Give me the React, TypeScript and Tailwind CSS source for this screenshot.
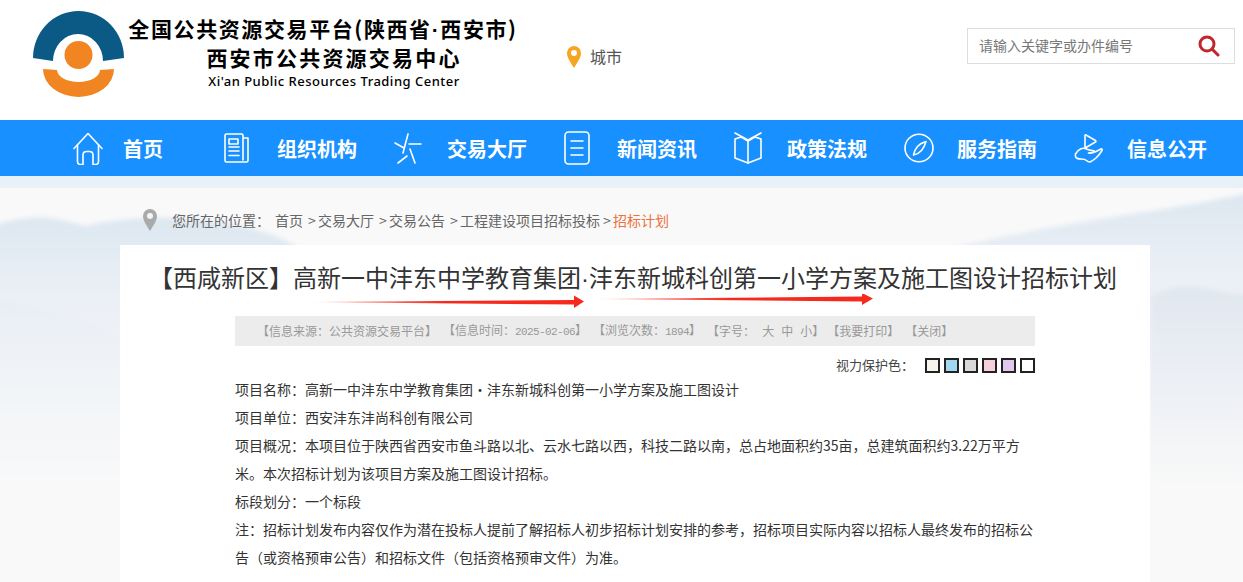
import React from "react";

const ic = { fill: "none", stroke: "#fff", strokeWidth: 1.6, strokeLinecap: "round" as const, strokeLinejoin: "round" as const };

const HomeIcon = () => (
  <svg width="30" height="33" viewBox="0 0 30 33" {...ic}>
    <path d="M1 16.5 15 1.5l14 15" />
    <path d="M4.500 13v16.500q0 3 3 3h2.500V23q0-3.500 3.500-3.500h3q3.500 0 3.500 3.500v9.500h2.500q3 0 3-3V13" />
  </svg>
);
const DocIcon = () => (
  <svg width="25" height="30" viewBox="0 0 25 30" {...ic}>
    <path d="M19 5V2.500Q19 1 17.500 1H2.500Q1 1 1 2.500v25Q1 29 2.500 29h20q1.500 0 1.500-1.500V5h-5v22" />
    <path d="M5 6h9v5H5zM5 14h10M5 18h10M5 22.500h10" />
  </svg>
);
const StarIcon = () => (
  <svg width="28" height="31" viewBox="0 0 28 31" {...ic}>
    <path d="M14 1 9 20M1 10l9 5M15 11h12M16 16l5 14M4 30l9-7" />
  </svg>
);
const ListIcon = () => (
  <svg width="26" height="34" viewBox="0 0 26 34" {...ic}>
    <rect x="1" y="1" width="24" height="32" rx="3.500" />
    <path d="M7 10h12M7 17h12M7 24h12" />
  </svg>
);
const BookIcon = () => (
  <svg width="28" height="32" viewBox="0 0 28 32" {...ic}>
    <path d="M1 1l13 7 13-7" />
    <path d="M1 7v19l13 5 13-5V7l-6-2-7 4-7-4z" />
    <path d="M14 9v22" />
  </svg>
);
const CompassIcon = () => (
  <svg width="30" height="30" viewBox="0 0 30 30" {...ic}>
    <ellipse cx="15" cy="15" rx="14" ry="13.800" />
    <path d="M22 8.500q-1.500 5.500-4.500 9t-8 4.500q1-5 4-8.500t8.500-5z" />
  </svg>
);
const HandIcon = () => (
  <svg width="30" height="29" viewBox="0 0 30 29" {...ic}>
    <path d="M11 1.500v11.500q0 1 1 .500l9.500-5.500q1-.700 0-1.500L12 1q-1-.500-1 .500z" />
    <path d="M1.500 20q2-3.500 5-5t6 0 6 1.500q2.500 0 1.500 1.500t-5.500 1l6.500-1 6-3q1.500-.500 1 1.500-3 5-6 7.500T16 28q-2 0-3.500-1.500T7 25t-5-1.500q-1-1.500-.500-3.500z" />
  </svg>
);

const navItems = [
  { label: "首页", Icon: HomeIcon, cls: "w-[151px]", box: "w-[50px]" },
  { label: "组织机构", Icon: DocIcon, cls: "w-[170px]", box: "w-[53px]" },
  { label: "交易大厅", Icon: StarIcon, cls: "w-[170px]", box: "w-[53px]" },
  { label: "新闻资讯", Icon: ListIcon, cls: "w-[170px]", box: "w-[53px]" },
  { label: "政策法规", Icon: BookIcon, cls: "w-[170px]", box: "w-[53px]" },
  { label: "服务指南", Icon: CompassIcon, cls: "w-[170px]", box: "w-[53px]" },
  { label: "信息公开", Icon: HandIcon, cls: "w-[116px]", box: "w-[53px]" },
];

const crumbs = ["交易大厅", "交易公告", "工程建设项目招标投标"];

const Pin = ({ color, w, h }: { color: string; w: number; h: number }) => (
  <svg width={w} height={h} viewBox="0 0 14 22">
    <path fillRule="evenodd" fill={color} d="M7 22C3 15.500 0 11.500 0 7a7 7 0 0 1 14 0c0 4.500-3 8.500-7 15zM7 4a3 3 0 1 0 0 6 3 3 0 0 0 0-6z" />
  </svg>
);

const Backdrop = () => (
  <svg className="absolute inset-0 w-full h-full" viewBox="0 0 1243 394" preserveAspectRatio="none">
    <defs>
      <linearGradient id="m1" x1="0" y1="0" x2="0" y2="1">
        <stop offset="0" stopColor="#dde7f0" />
        <stop offset="0.3" stopColor="#ebf0f6" />
        <stop offset="1" stopColor="#f9f9f9" />
      </linearGradient>
      <linearGradient id="m2" x1="0" y1="0" x2="0" y2="1">
        <stop offset="0" stopColor="#e0e7f0" />
        <stop offset="0.5" stopColor="#edf0f5" />
        <stop offset="1" stopColor="#f9f9f9" />
      </linearGradient>
      <linearGradient id="m3" x1="0" y1="0" x2="0" y2="1">
        <stop offset="0" stopColor="#e8eef5" />
        <stop offset="1" stopColor="#f9f9f9" stopOpacity="0" />
      </linearGradient>
      <filter id="soft"><feGaussianBlur stdDeviation="2.500" /></filter>
    </defs>
    <rect width="1243" height="394" fill="#f9f9fa" />
    <g filter="url(#soft)">
      <path d="M-10 38Q30 26 55 31T85 38Q110 32 150 30T240 38T310 70V300H-10z" fill="url(#m1)" />
      <path d="M-10 112Q60 118 120 150V270H-10z" fill="url(#m3)" />
      <path d="M950 60Q1040 40 1120 28T1255 4V290H950z" fill="url(#m1)" />
      <path d="M1150 108Q1175 94 1205 100T1255 108V300H1150z" fill="url(#m2)" />
    </g>
  </svg>
);

const Arrows = () => (
  <svg className="absolute left-[184px] top-[49px]" width="760" height="20" viewBox="0 0 760 20">
    <defs>
      <linearGradient id="a1" x1="0" y1="0" x2="1" y2="0">
        <stop offset="0" stopColor="#f62a1c" stopOpacity="0" />
        <stop offset="0.2" stopColor="#f62a1c" stopOpacity="0.55" />
        <stop offset="0.5" stopColor="#f62a1c" />
        <stop offset="1" stopColor="#f62a1c" />
      </linearGradient>
    </defs>
    <path d="M0 8 270 6V1.500l10 6-10 6.500V10.500Z" fill="url(#a1)" />
    <path d="M284 5 558 2.500V-1l11 5.500-11 6.500V7.500Z" fill="url(#a1)" />
  </svg>
);

const swatches = ["bg-[#f7f4ee]", "bg-[#a0d8ef]", "bg-[#d9d9d9]", "bg-[#f7d0da]", "bg-[#e0c8ef]", "bg-white"];

const Num12 = ({ children }: { children: React.ReactNode }) => (
  <span className="font-['Liberation_Mono'] text-[11px] tracking-[-.6px]">{children}</span>
);

export default function App() {
  return (
    <div className="h-screen overflow-hidden flex flex-col bg-white font-['Noto_Sans_CJK_SC',sans-serif] text-[#333]">
      <header className="h-[120px] shrink-0 flex items-start">
        <svg className="ml-[33px] mt-[11px] shrink-0" width="92" height="87" viewBox="33 11 92 87">
          <path d="M33 58A45.500 47 0 1 1 124 58L103 61A25 27 0 1 0 53 61Z" fill="#0b5a86" />
          <circle cx="78.500" cy="55" r="14" fill="#f08521" />
          <path d="M43 69 57 70A21.500 12 0 0 0 100 70L114 69A35.500 28 0 0 1 43 69Z" fill="#f08521" />
        </svg>
        <div className="ml-[4px] w-[388px] mt-[14px] flex flex-col items-center text-black">
          <div className="text-[21px] leading-[28px] font-bold tracking-[1.600px] whitespace-nowrap">全国公共资源交易平台(陕西省<span className="font-['Liberation_Sans']">·</span>西安市)</div>
          <div className="ml-[22px] text-[21px] leading-[27px] font-bold tracking-[2.200px] whitespace-nowrap">西安市公共资源交易中心</div>
          <div className="ml-[22px] text-[13px] leading-[21px] font-['Noto_Sans'] font-medium tracking-[.5px] whitespace-nowrap">Xi'an Public Resources Trading Center</div>
        </div>
        <div className="ml-[50px] mt-[46px] flex items-center gap-[9px]">
          <Pin color="#f5a623" w={14} h={22} />
          <span className="text-[16px] text-[#555] leading-[22px] -mt-[2px]">城市</span>
        </div>
        <div className="ml-[345px] mt-[28px] w-[268px] h-[36px] border border-[#ddd] flex items-center justify-between pl-[11px] pr-[14px]">
          <span className="text-[14px] leading-[20px] -mt-[2px] text-[#777]">请输入关键字或办件编号</span>
          <svg width="22" height="22" viewBox="0 0 22 22" fill="none" stroke="#c0272d" strokeWidth="3" strokeLinecap="round">
            <circle cx="9" cy="9" r="7" />
            <path d="M14 14l6 6" />
          </svg>
        </div>
      </header>

      <nav className="h-[56px] shrink-0 bg-[#1890ff] flex items-center pl-[73px]">
        {navItems.map(({ label, Icon, cls, box }) => (
          <div key={label} className={`${cls} shrink-0 flex items-center`}>
            <div className={`${box} shrink-0 flex items-center`}><Icon /></div>
            <span className="text-white text-[20px] leading-[30px] mt-[2px] font-bold whitespace-nowrap">{label}</span>
          </div>
        ))}
      </nav>
      <div className="h-[12px] shrink-0 bg-[#e8f1f8]" />

      <main className="relative flex-1 min-h-0">
        <Backdrop />
        <div className="relative h-full w-[1030px] ml-[120px] flex flex-col">
          <div className="h-[57px] shrink-0 flex items-center pt-[7px] pl-[23px] text-[14px] text-[#666] whitespace-nowrap">
            <Pin color="#aaaaaa" w={14} h={22} />
            <span className="ml-[15px] w-[103px]">您所在的位置：</span>
            <span>首页</span>
            {crumbs.map((c) => (
              <span key={c} className="ml-[5px]"><span className="inline-block w-[10px]">&gt;</span>{c}</span>
            ))}
            <span className="ml-[3px]"><span className="inline-block w-[10px]">&gt;</span><span className="text-[#f0703a]">招标计划</span></span>
          </div>
          <div className="relative flex-1 bg-white px-[115px]">
            <h1 className="-mx-[115px] pt-[14px] pr-[4px] h-[71px] text-center text-[24px] leading-[36px] font-normal text-[#333] whitespace-nowrap">【西咸新区】高新一中沣东中学教育集团<span className="font-['Liberation_Sans']">·</span>沣东新城科创第一小学方案及施工图设计招标计划</h1>
            <Arrows />
            <div className="h-[30px] bg-[#ececec] flex items-center gap-[6px] pl-[22px] text-[12px] text-[#999] whitespace-nowrap">
              <span>【信息来源：公共资源交易平台】</span>
              <span>【信息时间：<Num12>2025-02-06</Num12>】</span>
              <span>【浏览次数：<Num12>1894</Num12>】</span>
              <span className="flex -mr-[3px]">
                <span>【字号：</span>
                <span className="ml-[7px]">大</span>
                <span className="ml-[7px]">中</span>
                <span className="ml-[7px]">小</span>
                <span>】</span>
              </span>
              <span>【我要打印】</span>
              <span>【关闭】</span>
            </div>
            <div className="h-[30px] flex items-center justify-end pt-[8px]">
              <span className="text-[13px] text-[#444] mr-[11px]">视力保护色：</span>
              <div className="flex gap-[4px]">
                {swatches.map((s, i) => (
                  <div key={i} className={`w-[15px] h-[15px] border-2 border-[#222] ${s}`} />
                ))}
              </div>
            </div>
            <div className="-mt-[1px] text-[14px] leading-[28px] text-[#333]">
              <p>项目名称：高新一中沣东中学教育集团·沣东新城科创第一小学方案及施工图设计</p>
              <p>项目单位：西安沣东沣尚科创有限公司</p>
              <p>项目概况：本项目位于陕西省西安市鱼斗路以北、云水七路以西，科技二路以南，总占地面积约35亩，总建筑面积约3.22万平方米。本次招标计划为该项目方案及施工图设计招标。</p>
              <p>标段划分：一个标段</p>
              <p>注：招标计划发布内容仅作为潜在投标人提前了解招标人初步招标计划安排的参考，招标项目实际内容以招标人最终发布的招标公告（或资格预审公告）和招标文件（包括资格预审文件）为准。</p>
            </div>
          </div>
        </div>
      </main>
    </div>
  );
}
